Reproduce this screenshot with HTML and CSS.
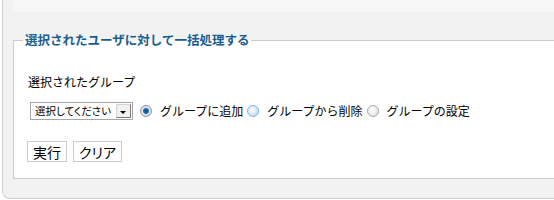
FILE: index.html
```html
<!DOCTYPE html>
<html lang="ja">
<head>
    <meta charset="UTF-8">
    <title>一括処理</title>
    <link rel="stylesheet" href="styles.css">
</head>
<body>
    <div class="panel">
        <div class="panel-top"></div>

        <form class="bulk-form">
            <fieldset class="bulk">
                <legend class="bulk-title">選択されたユーザに対して一括処理する</legend>

                <div class="field-label">選択されたグループ</div>

                <div class="field-row">
                    <span class="select-box">
                        <select class="group-select">
                            <option>選択してください</option>
                        </select>
                        <span class="select-arrow"></span>
                    </span>
                    <input class="radio" type="radio" name="mode" id="modeAdd" checked>
                    <label class="radio-label" for="modeAdd">グループに追加</label>
                    <input class="radio radio-hover" type="radio" name="mode" id="modeDel">
                    <label class="radio-label" for="modeDel">グループから削除</label>
                    <input class="radio" type="radio" name="mode" id="modeSet">
                    <label class="radio-label" for="modeSet">グループの設定</label>
                </div>

                <div class="buttons">
                    <button class="btn" type="submit">実行</button>
                    <button class="btn" type="reset">クリア</button>
                </div>
            </fieldset>
        </form>
    </div>
</body>
</html>
```

FILE: styles.css
```css
body {
    margin: 0;
    background: #fff;
    font-family: "Noto Sans CJK JP", "Noto Sans", sans-serif;
    font-size: 12px;
    color: #000;
}

.panel {
    margin-left: 2px;
    height: 198px;
    background: #f2f2f2;
    border-left: 1px solid #cfcfcf;
    border-bottom: 1px solid #cfcfcf;
    border-bottom-left-radius: 8px;
    overflow: hidden;
}

.panel-top {
    margin-left: 10px;
    height: 12px;
    background: #f6f6f6;
}

.bulk-form {
    margin: 20px 0 0 10px;
}

.bulk {
    margin: 0;
    padding: 0 14px 12px 14px;
    height: 133px;
    background: #fff;
    border: 1px solid #cccccc;
    border-right: none;
}

.bulk-title {
    margin-left: -5px;
    padding: 0 2px;
    color: #1a5e91;
    font-size: 12.5px;
    font-weight: bold;
    line-height: 16px;
}

.field-label {
    margin-top: 26px;
    line-height: 16px;
}

.field-row {
    display: flex;
    align-items: center;
    margin-top: 12px;
    margin-left: 2px;
}

.select-box {
    display: inline-flex;
    align-items: center;
    height: 16px;
    width: 101px;
    border: 1px solid #a6a6a6;
    background: #fff;
}

.group-select {
    appearance: none;
    -webkit-appearance: none;
    flex: 1;
    min-width: 0;
    border: none;
    background: transparent;
    padding: 0 0 0 4px;
    font-family: inherit;
    font-size: 10.5px;
    font-feature-settings: "palt";
    height: 16px;
    line-height: 16px;
    outline: none;
}

.select-arrow {
    position: relative;
    width: 15px;
    height: 14px;
    margin-right: 1px;
    background: #f0f0f0;
    border: 1px solid #7b7b7b;
    border-top-color: #d4d4d4;
    border-left-color: #d4d4d4;
    box-sizing: border-box;
}

.select-arrow::after {
    content: "";
    position: absolute;
    left: 3px;
    top: 6px;
    border-left: 3px solid transparent;
    border-right: 3px solid transparent;
    border-top: 3px solid #000;
}

.radio {
    appearance: none;
    -webkit-appearance: none;
    width: 12px;
    height: 12px;
    margin: 0 0 0 4px;
    border-radius: 50%;
    border: 1px solid #a8a8a8;
    background: radial-gradient(circle at 40% 40%, #ffffff 0, #e4e4e4 70%, #cfcfcf 100%);
    box-sizing: border-box;
}

.radio:first-of-type {
    margin-left: 7px;
}

.radio:checked {
    border-color: #8d98a6;
    background: radial-gradient(circle, #0f4d8c 0, #1e6fb8 2.5px, #dfe6ee 3.5px, #c7ced6 100%);
}

.radio-hover {
    border-color: #7fb0e0;
    background: radial-gradient(circle at 40% 40%, #ffffff 0, #cfe4f8 60%, #a9cdf0 100%);
}

.radio-label {
    margin-left: 8px;
    line-height: 16px;
}

.buttons {
    display: flex;
    gap: 6px;
    margin-top: 21px;
    margin-left: -1px;
}

.btn {
    height: 21px;
    padding: 0 5px;
    background: #fff;
    border: 1px solid #cccccc;
    font-family: inherit;
    font-size: 14px;
    font-feature-settings: "palt";
    line-height: 18px;
    color: #000;
}
```
